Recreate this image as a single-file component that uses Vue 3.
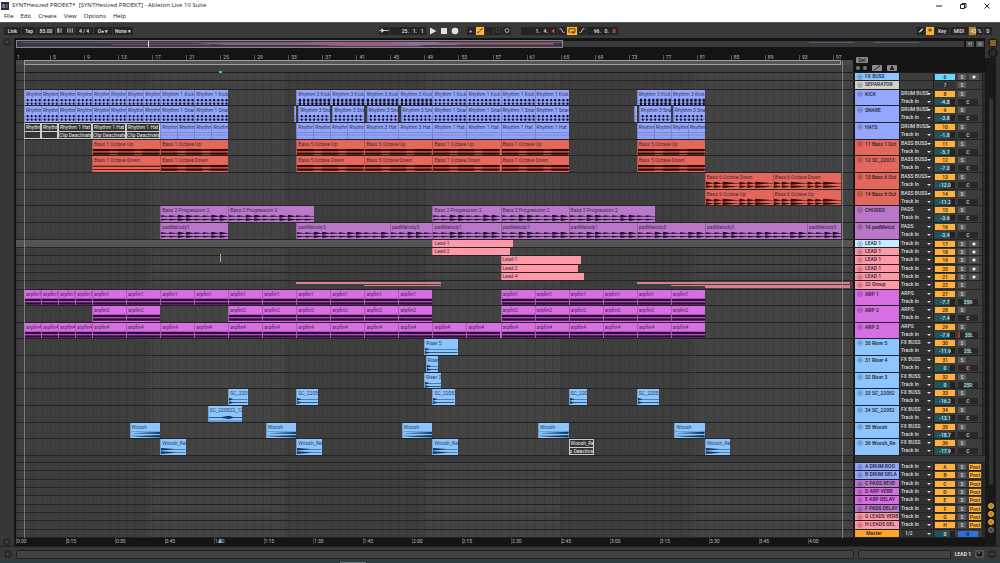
<script setup>
const BAR = 838 / 98.36
const SPAN = 98.36
const LEAD_IN = 0.94

const C = {
  blue: '#94a7ff', red: '#e4675b', purple: '#ba77ca', pink: '#ff99a8',
  magenta: '#d76ee2', sky: '#8dc5ff', ice: '#c4ecff', grey: '#d2d2cb'
}

// Consecutive clips of equal length, in bars
const run = (label, start, len, count, extra = {}) =>
  Array.from({ length: count }, (_, i) => ({ label, start: start + i * len, len, ...extra }))

const tracks = [
  { name: 'FX BUSS', color: C.sky, num: '6', act: 'cyan', rec: true, noIo: true },
  { name: 'SEPARATOR', color: C.grey, num: '7', act: 'mute', noIo: true },
  { name: 'KICK', color: C.blue, num: '8', out: 'DRUM BUSS', vol: '-4.8', pan: 'C', wave: 'beat', clips: [
    ...run('Rhythm 1 Kick', 0, 2, 8), ...run('Rhythm 1 Kick', 16, 4, 2),
    ...run('Rhythm 3 Kick', 32, 4, 4, { heavy: true }), ...run('Rhythm 1 Kick', 48, 4, 4),
    ...run('Rhythm 3 Kick', 72, 4, 2, { heavy: true })] },
  { name: 'SNARE', color: C.blue, num: '9', out: 'DRUM BUSS', vol: '-3.8', pan: 'C', wave: 'beat', clips: [
    ...run('Rhythm 1 Snare', 0, 2, 8), ...run('Rhythm 1 Snare', 16, 4, 2),
    { label: '', start: 31.7, len: 0.3 },
    ...run('Rhythm 3 Snare', 32.25, 4, 4).map(c => ({ ...c, len: 3.75 })),
    ...run('Rhythm 1 Snare', 48, 4, 4),
    { label: '', start: 71.7, len: 0.3 },
    ...run('Rhythm 3 Snare', 72.25, 4, 2).map(c => ({ ...c, len: 3.75 }))] },
  { name: 'HATS', color: C.blue, num: '10', out: 'DRUM BUSS', vol: '-1.8', pan: 'C', wave: 'thin', clips: [
    ...run('Rhythm 1 Hat', 0, 2, 2, { off: ' ' }), ...run('Rhythm 1 Hat', 4, 4, 3, { off: 'Clip Deactivated' }),
    ...run('Rhythm 1 Hat', 16, 2, 4), ...run('Rhythm 3 Hat', 32, 2, 4), ...run('Rhythm 3 Hat', 40, 4, 2),
    ...run('Rhythm 1 Hat', 48, 4, 4), ...run('Rhythm 3 Hat', 72, 2, 4)] },
  { name: '11 Bass 1 Oct', color: C.red, num: '11', out: 'BASS BUSS', vol: '-5.7', pan: 'C', wave: 'bass', clips: [
    ...run('Bass 1 Octave Up', 8, 8, 2), ...run('Bass 5 Octave Up', 32, 8, 2),
    ...run('Bass 1 Octave Up', 48, 8, 2), ...run('Bass 5 Octave Up', 72, 8, 1)] },
  { name: '12 SC_22013', color: C.red, num: '12', out: 'BASS BUSS', vol: '-7.0', pan: 'C', wave: 'bass', clips: [
    { label: 'Bass 1 Octave Down', start: 8, len: 8, light: true }, ...run('Bass 1 Octave Down', 16, 8, 1),
    ...run('Bass 5 Octave Down', 32, 8, 2), ...run('Bass 1 Octave Down', 48, 8, 2), ...run('Bass 5 Octave Down', 72, 8, 1)] },
  { name: '13 Bass 6 Oct', color: C.red, num: '13', out: 'BASS BUSS', vol: '-12.0', pan: 'C', wave: 'decay',
    clips: run('Bass 6 Octave Down', 80, 8, 2) },
  { name: '14 Bass 6 Oct', color: C.red, num: '14', out: 'BASS BUSS', vol: '-11.2', pan: 'C', wave: 'decay',
    clips: run('Bass 6 Octave Up', 80, 8, 2) },
  { name: 'CHORDS', color: C.purple, num: '15', out: 'PADS', vol: '-3.6', pan: 'C', wave: 'chord', clips: [
    ...run('Bass 2 Progression 2', 16, 8, 1), ...run('Bass 2 Progression 2', 24, 10.1, 1),
    ...run('Bass 2 Progression 2', 48, 8, 2), ...run('Bass 2 Progression 2', 64, 10.1, 1)] },
  { name: '16 padMelod', color: C.purple, num: '16', out: 'PADS', vol: '-3.4', pan: 'C', wave: 'chord', clips: [
    ...run('padMelody1', 16, 8, 1), ...run('padMelody3', 32, 11, 1), ...run('padMelody3', 43, 5, 1),
    ...run('padMelody1', 48, 8, 3), ...run('padMelody3', 72, 8, 1), ...run('padMelody3', 80, 12, 1), ...run('padMelody3', 92, 4, 1)] },
  { name: 'LEAD 1', color: C.ice, clipColor: C.pink, num: '17', rec: true, selected: true, clips: run('Lead-1', 48, 9.45, 1) },
  { name: 'LEAD 1', color: C.pink, num: '18', rec: true, clips: run('Lead-2', 48, 9.15, 1) },
  { name: 'LEAD 1', color: C.pink, num: '19', rec: true, clips: run('Lead-1', 56, 9.45, 1) },
  { name: 'LEAD 1', color: C.pink, num: '20', rec: true, clips: run('Lead-2', 56, 9.15, 1) },
  { name: 'LEAD 1', color: C.pink, num: '21', rec: true, clips: run('Lead-4', 56, 9.85, 1) },
  { name: '22 Group', color: C.pink, num: '22', group: [
    [32, 17, 0], [40, 9, 1], [72, 25.1, 0], [76, 21.1, 1], [80, 17.1, 2]] },
  { name: 'ARP 1', color: C.magenta, num: '27', out: 'ARPS', vol: '-7.7', pan: '35R', wave: 'arp', clips: [
    ...run('arpfin1', 0, 2, 4), ...run('arpfin1', 8, 4, 10), ...run('arpfin1', 56, 4, 6)] },
  { name: 'ARP 2', color: C.magenta, num: '28', out: 'ARPS', vol: '-7.4', pan: 'C', wave: 'arp', clips: [
    ...run('arpfin2', 8, 4, 2), ...run('arpfin2', 24, 4, 6), ...run('arpfin2', 56, 4, 6)] },
  { name: 'ARP 3', color: C.magenta, num: '29', out: 'ARPS', vol: '-7.9', pan: '35L', dot: true, wave: 'arp', clips: [
    ...run('arpfin4', 0, 2, 4), ...run('arpfin4', 8, 4, 18)] },
  { name: '30 Riser 5', color: C.sky, num: '30', out: 'FX BUSS', vol: '-11.9', pan: '25L', wave: 'hit', clips: run('Riser 5', 47.05, 3.95, 1) },
  { name: '31 Riser 4', color: C.sky, num: '31', out: 'FX BUSS', vol: '0', pan: 'C', wave: 'hit', clips: run('Riser 4', 47.2, 1.5, 1) },
  { name: '32 Riser 3', color: C.sky, num: '32', out: 'FX BUSS', vol: '0', pan: '25R', wave: 'hit', clips: run('Riser 3', 47, 2, 1) },
  { name: '33 SC_22052', color: C.sky, num: '33', out: 'FX BUSS', vol: '-16.2', pan: 'C', wave: 'hit',
    clips: [[24, 2.3], [32, 2.6], [48, 2.6], [64, 2.2], [72, 2.6]].map(([start, len]) => ({ label: 'SC_220522', start, len })) },
  { name: '34 SC_22052', color: C.sky, num: '34', out: 'FX BUSS', vol: '-13.1', pan: 'C', wave: 'swell', clips: run('SC_220522_12', 21.6, 4, 1) },
  { name: '35 Woosh', color: C.sky, num: '35', out: 'FX BUSS', vol: '-18.7', pan: 'C', wave: 'rise', clips: run('Woosh', 12.4, 16, 5).map(c => ({ ...c, len: 3.6 })) },
  { name: '36 Woosh_Re', color: C.sky, num: '36', out: 'FX BUSS', vol: '-17.9', pan: 'C', wave: 'fall',
    clips: run('Woosh_Re', 16, 16, 5).map((c, i) => ({ ...c, len: 3, off: i === 3 ? 'p Deactivat' : undefined })) }
]

const returns = [
  ['A DRUM ROO', C.blue], ['B DRUM DELA', C.blue], ['C PADS REVE', C.purple], ['D ARP VERB', C.magenta],
  ['E ARP DELAY', C.magenta], ['F PADS DELAY', C.purple], ['G LEADS VERB', C.pink], ['H LEADS DEL', C.pink]
].map(([name, color]) => ({ name, color, num: name[0], post: true }))

const rows = [
  ...tracks.map(t => ({ ...t, tall: !!t.out })),
  { spacer: true },
  ...returns,
  { name: 'Master', color: '#ffa52c', master: true }
]
const gridRows = rows.map(r => (r.tall ? 'minmax(0, 2fr)' : r.spacer ? '7px' : 'minmax(0, 1fr)')).join(' ')

const pct = bars => (bars / SPAN) * 100 + '%'
const place = c => ({ left: pct(LEAD_IN + c.start), width: pct(c.len) })

const wedge = (x, y, w, h) => `M${x} ${y - h}L${x + w} ${y}L${x} ${y + h}Z`
const box = (x, y, w, h) => `M${x} ${y}h${w}v${h}h${-w}Z`

function wave(kind, clip) {
  const w = clip.len * BAR
  let d = ''
  for (const y of [2.6, 6.6]) {
    if (kind === 'beat') {
      d += box(0, y, w, 0.3)
      const r = clip.heavy ? 1.7 : 1.3
      for (let x = 2; x < w - 1; x += 4.26) d += box(x, y - r, r + 0.4, r * 2)
      if (clip.len === 4 || clip.heavy) for (let x = w * 0.55; x < w - 1; x += 4.26) d += box(x, y - 1, 1.3, 2)
    } else if (kind === 'thin') {
      d += box(0, y - 1, w, 0.4) + box(0, y + 1, w, 0.3)
    } else if (kind === 'bass') {
      d += box(0, y - (clip.light ? 0.5 : 1), w, clip.light ? 1 : 1.8)
      if (!clip.light) for (let x = 0; x < w; x += 25) d += box(x, y - 1.4, Math.min(17, w - x), 2.7)
    } else if (kind === 'decay') {
      for (const [x, l] of [[0, 8], [8, 9], [17, 16], [34, 8], [42, 8], [50, 18]]) d += wedge(x, y, l, 1.7)
      d += box(0, y - 0.2, w, 0.5)
    } else if (kind === 'chord') {
      d += box(0, y - 0.2, w, 0.6)
      for (let x = 0, i = 0; x < w - 4; x += 8.52, i++) d += wedge(x, y, 8.5, i % 4 < 2 ? 1 : 1.7)
    } else if (kind === 'arp') {
      d += box(0, y - 1.7, w, 3)
    } else if (kind === 'hit') {
      d += wedge(0, y, 6, 1.5) + box(0, y - 0.3, w, 0.7)
    } else if (kind === 'rise') {
      d += `M0 ${y}L${w} ${y - 1.6}V${y + 1}Z` + box(0, y - 2, w, 0.3)
    } else if (kind === 'fall') {
      d += wedge(0, y, w * 0.7, 1.5) + box(0, y - 0.3, w, 0.5)
    }
  }
  if (kind === 'swell') {
    d += box(0, 3.6, w, 0.8) + `M${w * 0.3} 4L${w * 0.6} 2L${w * 0.78} 4L${w * 0.6} 6Z` + box(0, 8, w, 0.4)
  }
  return d
}

const bars = Array.from({ length: 25 }, (_, i) => 1 + i * 4)
const times = ['0:00', '0:15', '0:30', '0:45', '1:00', '1:15', '1:30', '1:45', '2:00', '2:15', '2:30', '2:45', '3:00', '3:15', '3:30', '3:45', '4:00']
const menus = ['File', 'Edit', 'Create', 'View', 'Options', 'Help']
</script>

<template>
  <div class="window">
    <header class="titlebar">
      <svg class="logo" viewBox="0 0 8 8"><rect width="8" height="8" fill="#24283b" /><path d="M1.2 2v4M2.4 2v4M3.6 2v4M4.6 3h2.4M4.6 5h2.4" stroke="#bcc6d8" stroke-width=".6" /></svg>
      <h1>SYNTHesized PROEKT* &nbsp;[SYNTHesized PROEKT] - Ableton Live 10 Suite</h1>
      <div class="win-buttons">
        <button aria-label="Minimize"><svg viewBox="0 0 8 8"><path d="M1 4h6" /></svg></button>
        <button aria-label="Restore"><svg viewBox="0 0 8 8"><path d="M1.5 2.5h4v4h-4zM3 2.5v-1h4v4H5.5" /></svg></button>
        <button aria-label="Close"><svg viewBox="0 0 8 8"><path d="M1.5 1.5l5 5M6.5 1.5l-5 5" /></svg></button>
      </div>
    </header>
    <nav class="menubar">
      <button v-for="m in menus" :key="m">{{ m }}</button>
    </nav>

    <div class="toolbar">
      <div class="group">
        <button class="field w16">Link</button>
        <button class="field w14">Tap</button>
        <input class="field w18" aria-label="Tempo" value="85.00" />
        <button class="field w18" aria-label="Nudge tempo"><svg viewBox="0 0 16 6"><path d="M1 1h2v4H1zM4 1h1v4H4zM10 1h1v4h-1zM12 1h1v4h-1zM14 1h1v4h-1z" fill="#aaa" /></svg></button>
        <input class="field w18" aria-label="Time signature" value="4 / 4" />
        <button class="field w18">O● ▾</button>
        <button class="field w20">None ▾</button>
      </div>
      <div class="group">
        <button class="field w10" aria-label="Follow"><svg viewBox="0 0 8 6"><path d="M0 3h8M2 1.5v3l2-1.5z" stroke="#ccc" stroke-width=".8" fill="#ccc" /></svg></button>
        <input class="field w36 right" aria-label="Position" value="25.   1.   1" />
        <button class="transport" aria-label="Play"><svg viewBox="0 0 8 8"><path d="M1 .5v7L7.500 4z" /></svg></button>
        <button class="transport" aria-label="Stop"><svg viewBox="0 0 8 8"><path d="M1 1h6v6H1z" /></svg></button>
        <button class="transport" aria-label="Record"><svg viewBox="0 0 8 8"><circle cx="4" cy="4" r="3.3" /></svg></button>
        <button class="field w8 gap">+</button>
        <button class="field w8 hot" aria-label="Automation arm"><svg viewBox="0 0 8 8"><path d="M1.5 6.5L4 4l2.500-2M1.5 6.5h1M6 2h1" stroke="#4d3200" fill="none" /></svg></button>
        <button class="field w8 dim">←</button>
        <button class="field w8 dim" aria-label="Capture"><svg viewBox="0 0 8 8"><path d="M2 3V2h1M5 2h1v1M6 5v1H5M3 6H2V5" stroke="#666" fill="none" /></svg></button>
        <button class="field w8" aria-label="Session record"><svg viewBox="0 0 8 8"><circle cx="4" cy="4" r="2.3" fill="none" stroke="#bbb" /></svg></button>
        <span class="field w36 right gap2">1. &nbsp; 4. &nbsp; <b>4</b></span>
        <button class="field w8" aria-label="Punch in"><svg viewBox="0 0 8 8"><path d="M1 2h2l2 4h2" stroke="#ccc" fill="none" /></svg></button>
        <button class="field w10 hot" aria-label="Loop"><svg viewBox="0 0 10 8"><path d="M3 6H1.5V2h7v4H5.5M6.5 5v2.2L4.5 6z" stroke="#4d3200" fill="none" /></svg></button>
        <button class="field w8" aria-label="Punch out"><svg viewBox="0 0 8 8"><path d="M1 6h2l2-4h2" stroke="#ccc" fill="none" /></svg></button>
        <span class="field w32 right">96. &nbsp; 0. &nbsp; <b>0</b></span>
      </div>
      <div class="group end">
        <button class="field w8" aria-label="Draw mode"><svg viewBox="0 0 8 8"><path d="M2 6l4-4" stroke="#ddd" stroke-width="1.5" /></svg></button>
        <button class="field w8 hot" aria-label="Computer keyboard"><svg viewBox="0 0 8 8"><path d="M2 2.5h4M2 4h4M4 2v4" stroke="#6a4600" /></svg></button>
        <button class="field w14">Key</button>
        <button class="field w18">MIDI</button>
        <span class="field w14 cpu">43 %</span>
        <span class="field w8">D</span>
      </div>
    </div>

    <main class="workspace">
      <aside class="rail left">
        <button class="fold" aria-label="Show browser"><svg viewBox="0 0 8 8"><path d="M2.5 3h3L4 5.5z" /></svg></button>
        <button class="fold" aria-label="Fold view"><svg viewBox="0 0 8 8"><path d="M3 2.5v3L5.5 4z" /></svg></button>
      </aside>

      <section class="arranger">
        <div class="overview">
          <div class="strip">
            <svg class="map" viewBox="0 0 548 6" preserveAspectRatio="none">
              <path d="M5 1h95v1H5z" fill="#515a76" />
              <path d="M80 1h470v1H80zM95 3h100v1H95z" fill="#6d5470" />
              <path d="M180 2h120l90 2H210z" fill="#875f84" />
              <path d="M270 3l30-2h80l30 4H330z" fill="#9b5c86" />
              <path d="M370 1h50l30 3h-50z" fill="#8f6fa0" />
              <path d="M400 2h140v1.500H450z" fill="#a65d68" />
              <path d="M5 5h535v.5H5z" fill="#52465a" />
            </svg>
            <i class="cursor"></i>
          </div>
          <div class="rest"><i></i><i></i></div>
          <button>H</button><button>W</button>
        </div>

        <div class="top">
          <div class="scales">
            <div class="ruler"><span v-for="b in bars" :key="b" :style="{ left: pct(b - 1) }">{{ b }}</span></div>
            <div class="loop"><i :style="{ left: pct(LEAD_IN), width: pct(96) }"></i></div>
            <div class="scrub"></div>
          </div>
          <div class="tools">
            <button>Set</button>
            <div><span class="dot"></span><span class="dot"></span>
              <button aria-label="Automation mode"><svg viewBox="0 0 8 6"><path d="M1 5l2-1 2-2 2-1" stroke="#222" fill="none" /></svg></button>
              <button aria-label="Lock envelopes"><svg viewBox="0 0 8 6"><path d="M2 3h4v2H2zM3 3V1h2v2" fill="#222" /></svg></button>
            </div>
          </div>
        </div>

        <div class="tracks" :style="{ gridTemplateRows: gridRows }">
          <div v-for="(t, i) in rows" :key="i" class="track" :class="{ tall: t.tall, spacer: t.spacer, selected: t.selected }">
            <div class="lane">
              <div v-for="(c, k) in t.clips" :key="k" class="clip" :class="[{ off: c.off }, t.wave]"
                   :style="{ ...place(c), '--tint': t.clipColor || t.color }">
                <span>{{ c.label }}</span>
                <em v-if="c.off">{{ c.off }}</em>
                <svg v-else-if="t.wave" :viewBox="`0 0 ${c.len * BAR} 9`" preserveAspectRatio="none"><path :d="wave(t.wave, c)" /></svg>
              </div>
              <i v-for="(g, k) in t.group" :key="'g' + k" class="thread" :class="'t' + g[2]" :style="place({ start: g[0], len: g[1] })"></i>
            </div>
            <div v-if="!t.spacer" class="head">
              <div class="name" :style="{ background: t.color }">
                <svg v-if="!t.master" viewBox="0 0 6 6"><circle cx="3" cy="3" r="2.4" fill="none" stroke="#0008" stroke-width=".6" /><path d="M1.8 2.4h2.4L3 4.2z" fill="#000a" /></svg>
                <span>{{ t.name }}</span>
              </div>
              <div class="io">
                <template v-if="!t.noIo">
                  <label v-if="t.out"><select :aria-label="t.name + ' output'"><option>{{ t.out }}</option></select></label>
                  <label :class="{ ratio: t.master }"><select :aria-label="t.name + ' input'"><option>{{ t.master ? '1/2' : 'Track In' }}</option></select></label>
                </template>
              </div>
              <div class="mix">
                <div class="line">
                  <template v-if="t.master">
                    <input class="vol" aria-label="Master volume" value="0" /><input class="pan cue" aria-label="Cue volume" value="0" />
                  </template>
                  <template v-else>
                    <button class="act" :class="t.act">{{ t.num }}</button>
                    <button class="solo">S</button>
                    <button v-if="t.rec" class="arm" aria-label="Arm"></button>
                    <button v-if="t.post" class="post">Post</button>
                  </template>
                </div>
                <div v-if="t.out" class="line">
                  <input class="vol" :aria-label="t.name + ' volume'" :value="t.vol" />
                  <input class="pan" :class="{ dotted: t.dot, side: t.pan !== 'C' }" :aria-label="t.name + ' pan'" :value="t.pan" />
                </div>
              </div>
              <div class="meter"></div>
            </div>
            <div v-else class="filler"></div>
          </div>
          <div class="marks">
            <i :style="{ left: pct(LEAD_IN) }"></i><i :style="{ left: pct(LEAD_IN + 96) }"></i>
            <b :style="{ left: pct(23.8) }"></b><u :style="{ left: pct(23.95) }"></u>
            <small>1/1</small>
          </div>
        </div>

        <div class="clock"><div><span v-for="(s, i) in times" :key="s" :style="{ left: (i * 49.5 / 838) * 100 + '%' }">{{ s }}</span>
          <svg :style="{ left: pct(23.7) }" viewBox="0 0 4 5"><path d="M0 5l2-5 2 5z" fill="#5fc4e0" /></svg></div></div>
      </section>

      <aside class="rail side">
        <div class="views">
          <button aria-label="Arrangement view"><svg viewBox="0 0 10 10"><circle cx="5" cy="5" r="4.5" fill="#151515" /><path d="M2 3h6M2 5h6M2 7h6" stroke="#ffb032" stroke-width="1.2" /></svg></button>
          <button aria-label="Session view"><svg viewBox="0 0 10 10"><circle cx="5" cy="5" r="4" fill="#2a2a2a" stroke="#111" stroke-width="1.5" /></svg></button>
        </div>
        <div class="scroll"><i></i></div>
        <div class="toggles">
          <button v-for="n in ['I·O', 'R', 'M', 'D']" :key="n" :aria-label="n" :class="{ idle: n === 'D' }"></button>
        </div>
      </aside>
    </main>

    <footer class="status">
      <button class="fold" aria-label="Show info"><svg viewBox="0 0 8 8"><path d="M3 2.5v3L5.5 4z" /></svg></button>
      <div class="info"></div>
      <div class="detail"></div>
      <span>LEAD 1</span>
      <svg viewBox="0 0 9 8"><path d="M1 1h7v6H1z" fill="#161616" stroke="#888" stroke-width=".8" /><path d="M3 3h2" stroke="#aaa" /></svg>
      <button class="fold" aria-label="Show detail"><svg viewBox="0 0 8 8"><path d="M2.5 5h3L4 2.5z" /></svg></button>
    </footer>
    <div class="taskbar"><i></i></div>
  </div>
</template>

<style>
html, body { margin: 0; background: #393939; }
</style>

<style scoped>
.window { display: flex; flex-direction: column; height: 100vh; min-height: 480px; overflow: hidden; background: #393939; color: #ddd; font: 5px/7px Roboto, "Open Sans", sans-serif; }
.window * { box-sizing: border-box; }
button, input, select { margin: 0; padding: 0; border: 0; border-radius: 0; background: none; color: inherit; font: inherit; appearance: none; min-width: 0; }
svg { display: block; }
i, em, b, u { font-style: normal; text-decoration: none; }

.titlebar { display: flex; flex: none; align-items: center; gap: 3px; height: 11px; padding-left: 1px; background: #fff; color: #222; font-family: "Open Sans", "Noto Sans", sans-serif; }
.titlebar h1 { margin: 0; flex: 1; font-size: 6px; line-height: 11px; font-weight: 400; white-space: nowrap; }
.logo { width: 8px; height: 8px; }
.win-buttons { display: flex; gap: 16px; padding-right: 9px; }
.win-buttons svg { width: 8px; height: 8px; fill: none; stroke: #222; stroke-width: 1; }
.menubar { display: flex; flex: none; gap: 7px; height: 11px; padding-left: 4px; background: #fff; color: #111; font: 6px/11px "Open Sans", "Noto Sans", sans-serif; }

.toolbar { display: grid; flex: none; grid-template-columns: 1fr auto 1fr; align-items: center; height: 16px; padding: 0 8px 0 4px; background: #393939; border-top: 1px solid #555; }
.group { display: flex; gap: 1px; align-items: center; }
.end { justify-content: flex-end; }
.field { display: block; height: 8px; background: #242424; color: #ddd; text-align: center; font-weight: 600; line-height: 8px; white-space: pre; overflow: hidden; }
.field svg { width: 100%; height: 7px; }
.field b { color: #f0553c; }
.right { text-align: right; padding-right: 2px; }
.w8 { width: 8px; } .w10 { width: 10px; } .w14 { width: 14px; } .w16 { width: 17px; } .w18 { width: 18px; } .w20 { width: 20px; } .w32 { width: 31px; } .w36 { width: 36px; }
.hot { background: #ffb032; }
.dim { color: #555; }
.gap { margin-left: 7px; }
.gap2 { margin-left: 9px; }
.transport { margin-left: 2px; }
.transport svg { width: 8px; height: 8px; fill: #e0e0e0; }
.cpu { background: linear-gradient(90deg, #b98524 50%, #242424 50%); }

.workspace { display: grid; grid-template-columns: 16px minmax(0, 1fr) 15px; grid-template-rows: minmax(0, 1fr); flex: 1; min-height: 0; }
.rail { display: flex; flex-direction: column; min-height: 0; }
.left { justify-content: space-between; align-items: center; background: #373737; border-right: 2px solid #161616; }
.fold { flex: none; width: 8px; height: 8px; border-radius: 50%; background: #292929; }
.fold svg { width: 8px; height: 8px; fill: #555; }

.arranger { display: flex; flex-direction: column; min-width: 0; min-height: 0; background: #141414; }
.overview { display: flex; flex: none; gap: 2px; height: 10px; padding: 2px 1px 0 0; }
.strip { position: relative; flex: 547; border: 1px solid #858585; background: #3a3740; }
.map { width: 100%; height: 100%; }
.cursor { position: absolute; left: 24%; top: 0; bottom: 0; width: 1px; background: #ddd; }
.rest { display: flex; gap: 20px; flex: 403; justify-content: flex-end; background: #3a3a3a; margin: 1px 0 1px -2px; }
.rest i { width: 45px; height: 1px; margin-top: 1px; background: #55597a; }
.rest i:last-child { margin-right: 45px; }
.overview button { width: 8px; background: #4b4b4b; color: #bbb; line-height: 6px; margin: 1px 0; overflow: hidden; }

.top { display: grid; flex: none; grid-template-columns: minmax(0, 1fr) 131px; }
.ruler { position: relative; height: 12px; color: #bbb; overflow: hidden; }
.ruler span { position: absolute; bottom: 0; height: 5px; padding-left: 2px; border-left: 1px solid #555; line-height: 5px; }
.ruler span:first-child { padding-left: 0; border-color: transparent; }
.loop { position: relative; height: 5px; background: #484848; }
.loop i { position: absolute; top: 0; bottom: 0; background: #555; border: 1px solid #a0a0a0; }
.scales { border-right: 1px solid #141414; }
.scrub { height: 7px; background: #404040; }
.tools { display: flex; flex-direction: column; gap: 2px; justify-content: flex-end; align-items: flex-start; padding: 0 0 1px 2px; }
.tools > div { display: flex; gap: 3px; align-items: center; }
.tools > div button { margin-left: 2px; }
.tools button { width: 10px; height: 6px; border-radius: 1px; background: #8a8a8a; color: #222; font-weight: 600; line-height: 6px; }
.tools > button { width: 12px; }
.tools svg { width: 8px; height: 6px; margin: 0 1px; }
.dot { width: 4px; height: 4px; border-radius: 50%; background: #777; }

.tracks { position: relative; display: grid; flex: 1; min-height: 0; border-top: 1px solid #1c1c1c; }
.track { display: grid; grid-template-columns: minmax(0, 1fr) 131px; grid-template-rows: minmax(0, 1fr); min-height: 0; overflow: hidden; border-bottom: 1px solid #242424; background: #444; }
.lane {
  position: relative; min-height: 0; border-right: 1px solid #1c1c1c;
  background:
    repeating-linear-gradient(90deg, rgba(0, 0, 0, .1) 0 1px, transparent 1px calc(100% / 98.36)),
    linear-gradient(90deg, #3e3e3e 16%, #434343 16% 32%, #3e3e3e 32% 49%, #434343 49% 65%, #3e3e3e 65% 81%, #434343 81%);
}
.selected .lane { background: #545454; }
.clip { position: absolute; top: 0; bottom: 0; display: flex; flex-direction: column; overflow: hidden; background: var(--tint); border-left: 1px solid #0003; color: #262033; line-height: 7px; }
.clip span { flex: none; padding-left: 1px; overflow: hidden; white-space: nowrap; opacity: .85; }
.tall .clip:not(.off) span { height: 8px; line-height: 8px; }
.clip svg { width: 100%; flex: 1; min-height: 0; fill: #150b22; }
.clip.thin svg { fill: #5a67a8; }
.hit svg, .rise svg, .fall svg, .swell svg { fill: #12385c; }
.bass svg, .decay svg { fill: #330805; }
.arp svg { fill: #2f0a38; }
.clip.off { background: #343434; border: 1px solid #ccc; color: #eee; }
.clip.off span { height: 7px; opacity: 1; }
.off em { flex: 1; overflow: hidden; border-top: 1px solid #ccc; white-space: pre; line-height: 6px; }
.thread { position: absolute; height: 1px; background: #d67f8a; }
.t0 { top: 1px; height: 2px; } .t1 { top: 4px; } .t2 { top: 5px; height: 2px; }

.head { display: grid; grid-template-columns: 45px 34px minmax(0, 1fr) 3px; grid-template-rows: minmax(0, 1fr); min-height: 0; overflow: hidden; border-left: 1px solid #141414; background: #3c3c3c; }
.name { display: flex; align-items: flex-start; gap: 2px; padding-left: 2px; overflow: hidden; border-right: 1px solid #222; color: #1c1c30; font-weight: 500; white-space: nowrap; }
.name svg { width: 6px; height: 6px; flex: none; margin-top: 1px; opacity: .8; }
.name span:first-child { padding-left: 9px; }
.tall .name span { line-height: 8px; }
.io { padding: 0 1px; border-right: 1px solid #1d1d1d; }
.io label { position: relative; display: block; height: 8px; background: #303030; }
.io label::after { content: ""; position: absolute; right: 1px; top: 3px; border: 2px solid transparent; border-top-color: #ddd; border-bottom: 0; }
.io select { display: block; width: 100%; height: 7px; color: #ddd; font-weight: 500; line-height: 7px; }
.io .ratio { padding-left: 4px; }
.mix { display: flex; flex-direction: column; padding-left: 1px; }
.line { display: flex; flex: none; gap: 3px; height: 8px; }
.line button, .line input { display: block; height: 6px; margin-top: 1px; line-height: 6px; text-align: center; font-weight: 600; overflow: hidden; }
.line .act { width: 20px; background: #ffb13c; color: #3d2a08; }
.line .cyan { background: #6ed4ff; }
.line .mute { background: #333; color: #bbb; }
.line .solo { width: 8px; background: #5a5a5a; color: #ccc; }
.line .arm { width: 10px; background: radial-gradient(circle, #eee 0 1px, #505050 2px); }
.line .post { width: 12px; background: #ffb13c; color: #4d3508; }
.line .vol { width: 20px; background: linear-gradient(90deg, #1f5560 0 75%, #222 75%); color: #ddd; }
.line .pan { width: 20px; background: #282828; color: #ccc; }
.line .side { background: linear-gradient(90deg, #282828 0 30%, #1f5560 30% 60%, #282828 60%); }
.line .cue { background: #2f6fdc; color: #112; }
.line .dotted { border-left: 2px solid #b83226; }
.meter { border-left: 1px solid #222; background: #2c2c2c; }
.spacer .lane { background: #3a3a3a; }
.filler { background: #393939; border-left: 1px solid #141414; }

.marks { position: absolute; inset: 0 131px 0 0; pointer-events: none; }
.marks i { position: absolute; top: -12px; bottom: 0; width: 1px; background: #9a9a9a; opacity: .7; }
.marks b { position: absolute; top: -2px; width: 3px; height: 2px; background: #4dc4cf; }
.marks u { position: absolute; top: 39%; width: 1px; height: 8px; background: #aaa; }
.marks small { position: absolute; right: 2px; bottom: 2px; font-size: 5px; color: #1c1c1c; }
.clock { flex: none; height: 8px; padding-right: 131px; color: #bbb; }
.clock div { position: relative; height: 7px; }
.clock span { position: absolute; top: 0; border-left: 1px solid #444; line-height: 6px; }
.clock svg { position: absolute; top: 0; width: 4px; height: 5px; }

.side.rail { align-items: center; padding-bottom: 2px; background: linear-gradient(90deg, #191919 0 11px, #303030 11px); }
.views { display: flex; flex-direction: column; width: 100%; align-items: center; background: #333; }
.views svg { width: 10px; height: 10px; }
.scroll { flex: 1; width: 4px; padding-top: 40px; margin-right: 4px; }
.scroll i { display: block; height: 100%; border-radius: 2px; background: #333; }
.toggles { display: flex; flex-direction: column; gap: 2px; margin: 18px 4px 11px 0; }
.toggles button { width: 6px; height: 6px; border-radius: 50%; border: 1px solid #ffb032; background: #a86e16; box-shadow: inset 0 0 0 1px #d18f28; }
.toggles .idle { border-color: #777; background: #444; box-shadow: none; }

.status { display: flex; flex: none; align-items: center; height: 15px; gap: 4px; padding: 0 4px; border-top: 1px solid #222; font-weight: 600; color: #eee; }
.info, .detail { height: 9px; border: 1px solid #202020; border-radius: 2px; background: #424242; }
.info { flex: 841; }
.detail { flex: 91; }
.status > svg { width: 9px; height: 8px; }
.taskbar { display: flex; flex: none; height: 2px; background: #2c3b3f; }
.taskbar i { width: 26px; height: 1px; margin: 1px 0 0 34%; background: #66767b; }
</style>
